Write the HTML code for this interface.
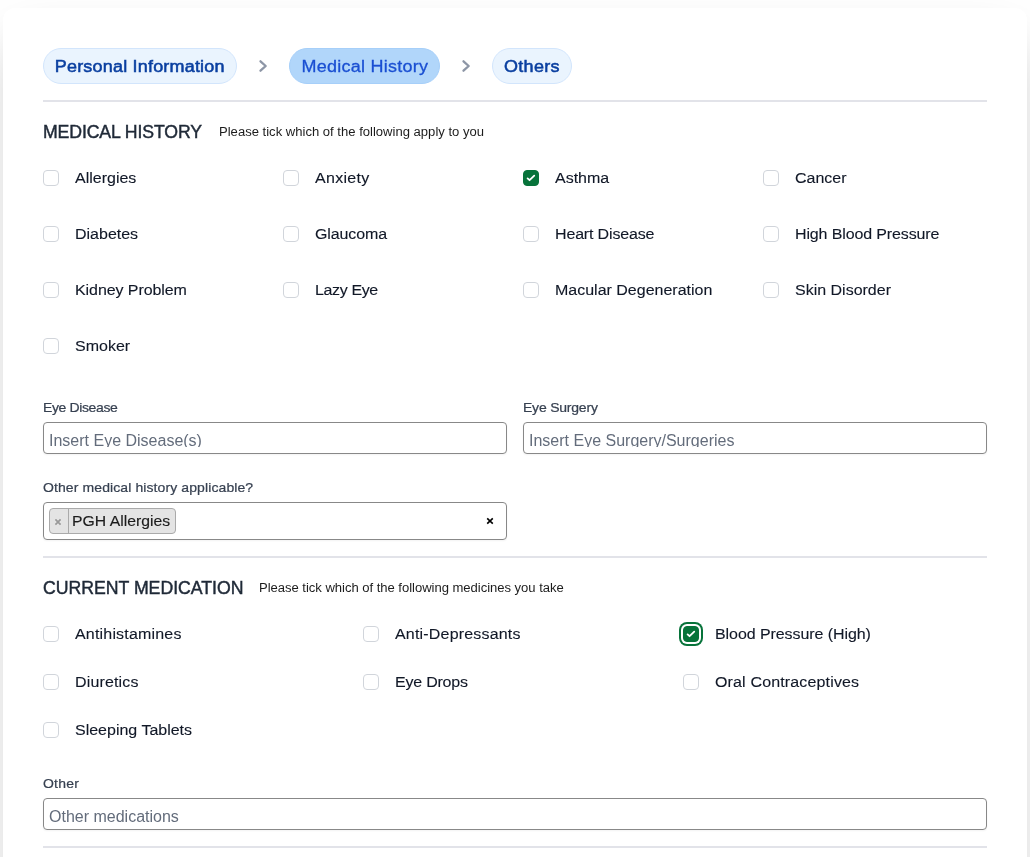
<!DOCTYPE html>
<html lang="en">
<head>
<meta charset="utf-8">
<title>Medical History</title>
<style>
*{box-sizing:border-box;margin:0;padding:0}
html,body{width:1030px;height:857px;overflow:hidden}
body{background:#fff;font-family:"Liberation Sans",sans-serif;color:#1f2937;position:relative}
.card{position:absolute;left:3px;top:8px;width:1024px;height:900px;background:#fff;border-radius:12px;box-shadow:0 25px 50px -12px rgba(0,0,0,.25)}
/* transparent composited layer => grayscale text antialiasing like the reference */
.layer{position:absolute;left:0;top:0;width:1030px;height:857px;will-change:transform}
/* tabs */
.tab{position:absolute;top:48px;height:36px;border-radius:18px;border:1px solid #d2e5fc;background:#eaf4fe;color:#0a3fa0;font-size:17.3px;font-weight:400;line-height:34px;text-align:center;white-space:nowrap;-webkit-text-stroke:.55px #0a3fa0}
.tab span{display:inline-block;transform:scaleX(1.04)}
.tab.active{background:#b1d6fa;border-color:#a6cff9;color:#1a4fd2;-webkit-text-stroke:.3px #1a4fd2}
.chev{position:absolute;top:59px;width:10px;height:14px}
.hr{position:absolute;left:43px;width:944px;height:2px;background:#e2e3e9}
h2{position:absolute;left:43px;font-size:17.7px;font-weight:400;color:#1f2937;line-height:24px;white-space:nowrap;letter-spacing:-.13px;-webkit-text-stroke:.45px #1f2937}
.sub{position:absolute;transform:scaleX(1.045);transform-origin:0 50%;font-size:12.5px;color:#1c1c1c;line-height:18px;white-space:nowrap}
.cb{position:absolute;width:16px;height:16px;border:1px solid #d1d5db;border-radius:4px;background:#fff}
.cb.on{background:#07733a;border-color:#07733a}
.cb.on svg{position:absolute;left:-1px;top:-1px;width:16px;height:16px}
.cb.focus{box-shadow:0 0 0 2px #fff,0 0 0 4px #07733a}
.lb{position:absolute;transform:scaleX(1.039);transform-origin:0 50%;font-size:15.4px;color:#111827;line-height:24px;white-space:nowrap;-webkit-text-stroke:.12px #111827}
.fl{position:absolute;transform:scaleX(1.041);transform-origin:0 50%;font-size:13.45px;color:#374151;line-height:20px;white-space:nowrap;-webkit-text-stroke:.22px #374151}
/* text inputs (placeholder sits low and is clipped, as in the reference) */
.in{position:absolute;height:32px;border:1px solid #888;border-radius:4px;background:#fff;box-shadow:0 1px 2px rgba(0,0,0,.05)}
.in .clip{position:absolute;left:0;top:0;right:0;height:24px;overflow:hidden}
.in .ph{position:absolute;left:5px;top:6px;font-size:16px;line-height:24px;color:#636c7b;white-space:nowrap}
/* select2-like multi select */
.sel{position:absolute;left:43px;top:502px;width:464px;height:38px;border:1px solid #888;border-radius:4px;background:#fff;box-shadow:0 1px 2px rgba(0,0,0,.05)}
.tag{position:absolute;left:5px;top:5px;height:26px;width:127px;border:1px solid #aaa;border-radius:4px;background:#e4e4e4;overflow:hidden}
.tag .x{position:absolute;left:0;top:0;width:19px;height:24px;border-right:1px solid #aaa}
.tag .x svg{position:absolute;left:4.3px;top:8.5px;width:8px;height:8px}
.tag .t{position:absolute;left:21.6px;top:0;transform:scaleX(1.05);transform-origin:0 50%;font-size:15px;line-height:24px;color:#1c1c1c;white-space:nowrap;-webkit-text-stroke:.15px #1c1c1c}
.clr{position:absolute;left:441.5px;top:14.3px;width:8px;height:8px}
</style>
</head>
<body>
<div class="card"></div>
<div class="layer">

<!-- Tabs -->
<div class="tab" style="left:43px;width:194px;letter-spacing:.2px"><span>Personal Information</span></div>
<svg class="chev" style="left:258px" viewBox="0 0 10 14"><path d="M2.5 2.3 L7.7 7 L2.5 11.7" fill="none" stroke="#8d96a6" stroke-width="2.3" stroke-linecap="round" stroke-linejoin="round"/></svg>
<div class="tab active" style="left:289px;width:151px;letter-spacing:.25px"><span>Medical History</span></div>
<svg class="chev" style="left:461px" viewBox="0 0 10 14"><path d="M2.5 2.3 L7.7 7 L2.5 11.7" fill="none" stroke="#8d96a6" stroke-width="2.3" stroke-linecap="round" stroke-linejoin="round"/></svg>
<div class="tab" style="left:492px;width:80px;letter-spacing:.33px"><span>Others</span></div>

<div class="hr" style="top:100px"></div>

<!-- Medical history -->
<h2 style="top:120px">MEDICAL HISTORY</h2>
<div class="sub" style="left:219px;top:123px">Please tick which of the following apply to you</div>

<!--MH-->
<div class="cb" style="left:43px;top:170px"></div><div class="lb" style="left:75px;top:166px">Allergies</div>
<div class="cb" style="left:283px;top:170px"></div><div class="lb" style="left:315px;top:166px;letter-spacing:0.3px">Anxiety</div>
<div class="cb on" style="left:523px;top:170px"><svg viewBox="0 0 16 16"><path d="M4.6 8.35L6.55 10.2L11.25 5.6" fill="none" stroke="#fff" stroke-width="1.8" stroke-linecap="round" stroke-linejoin="round"/></svg></div><div class="lb" style="left:555px;top:166px">Asthma</div>
<div class="cb" style="left:763px;top:170px"></div><div class="lb" style="left:795px;top:166px">Cancer</div>
<div class="cb" style="left:43px;top:226px"></div><div class="lb" style="left:75px;top:222px">Diabetes</div>
<div class="cb" style="left:283px;top:226px"></div><div class="lb" style="left:315px;top:222px;letter-spacing:-0.1px">Glaucoma</div>
<div class="cb" style="left:523px;top:226px"></div><div class="lb" style="left:555px;top:222px;letter-spacing:-0.15px">Heart Disease</div>
<div class="cb" style="left:763px;top:226px"></div><div class="lb" style="left:795px;top:222px;letter-spacing:-0.12px">High Blood Pressure</div>
<div class="cb" style="left:43px;top:282px"></div><div class="lb" style="left:75px;top:278px;letter-spacing:-0.07px">Kidney Problem</div>
<div class="cb" style="left:283px;top:282px"></div><div class="lb" style="left:315px;top:278px;letter-spacing:-0.35px">Lazy Eye</div>
<div class="cb" style="left:523px;top:282px"></div><div class="lb" style="left:555px;top:278px">Macular Degeneration</div>
<div class="cb" style="left:763px;top:282px"></div><div class="lb" style="left:795px;top:278px">Skin Disorder</div>
<div class="cb" style="left:43px;top:338px"></div><div class="lb" style="left:75px;top:334px">Smoker</div>
<!--/MH-->

<div class="fl" style="left:43px;top:398px;letter-spacing:-.36px">Eye Disease</div>
<div class="in" style="left:43px;top:422px;width:464px"><div class="clip"><span class="ph">Insert Eye Disease(s)</span></div></div>
<div class="fl" style="left:523px;top:398px;letter-spacing:-.2px">Eye Surgery</div>
<div class="in" style="left:523px;top:422px;width:464px"><div class="clip"><span class="ph">Insert Eye Surgery/Surgeries</span></div></div>

<div class="fl" style="left:43px;top:478px;letter-spacing:.1px">Other medical history applicable?</div>
<div class="sel">
  <div class="tag"><span class="x"><svg viewBox="-4 -4 8 8"><path d="M-2.6 -2.6L2.6 2.6M2.6 -2.6L-2.6 2.6" stroke="#999" stroke-width="1.7" fill="none"/></svg></span><span class="t">PGH Allergies</span></div>
  <svg class="clr" viewBox="-4 -4 8 8"><path d="M-2.8 -2.6L2.8 2.6M2.8 -2.6L-2.8 2.6" stroke="#000" stroke-width="1.6" fill="none"/></svg>
</div>

<div class="hr" style="top:556px"></div>

<!-- Current medication -->
<h2 style="top:576px;letter-spacing:-.02px">CURRENT MEDICATION</h2>
<div class="sub" style="left:259px;top:579px;letter-spacing:-.03px">Please tick which of the following medicines you take</div>

<!--CM-->
<div class="cb" style="left:43px;top:626px"></div><div class="lb" style="left:75px;top:622px;letter-spacing:0.18px">Antihistamines</div>
<div class="cb" style="left:363px;top:626px"></div><div class="lb" style="left:395px;top:622px;letter-spacing:0.18px">Anti-Depressants</div>
<div class="cb on focus" style="left:683px;top:626px"><svg viewBox="0 0 16 16"><path d="M4.6 8.35L6.55 10.2L11.25 5.6" fill="none" stroke="#fff" stroke-width="1.8" stroke-linecap="round" stroke-linejoin="round"/></svg></div><div class="lb" style="left:715px;top:622px;letter-spacing:-0.07px">Blood Pressure (High)</div>
<div class="cb" style="left:43px;top:674px"></div><div class="lb" style="left:75px;top:670px;letter-spacing:0.15px">Diuretics</div>
<div class="cb" style="left:363px;top:674px"></div><div class="lb" style="left:395px;top:670px;letter-spacing:-0.2px">Eye Drops</div>
<div class="cb" style="left:683px;top:674px"></div><div class="lb" style="left:715px;top:670px;letter-spacing:0.15px">Oral Contraceptives</div>
<div class="cb" style="left:43px;top:722px"></div><div class="lb" style="left:75px;top:718px">Sleeping Tablets</div>
<!--/CM-->

<div class="fl" style="left:43px;top:774px;letter-spacing:.2px">Other</div>
<div class="in" style="left:43px;top:798px;width:944px"><div class="clip"><span class="ph">Other medications</span></div></div>

<div class="hr" style="top:846px"></div>
</div>
</body>
</html>
